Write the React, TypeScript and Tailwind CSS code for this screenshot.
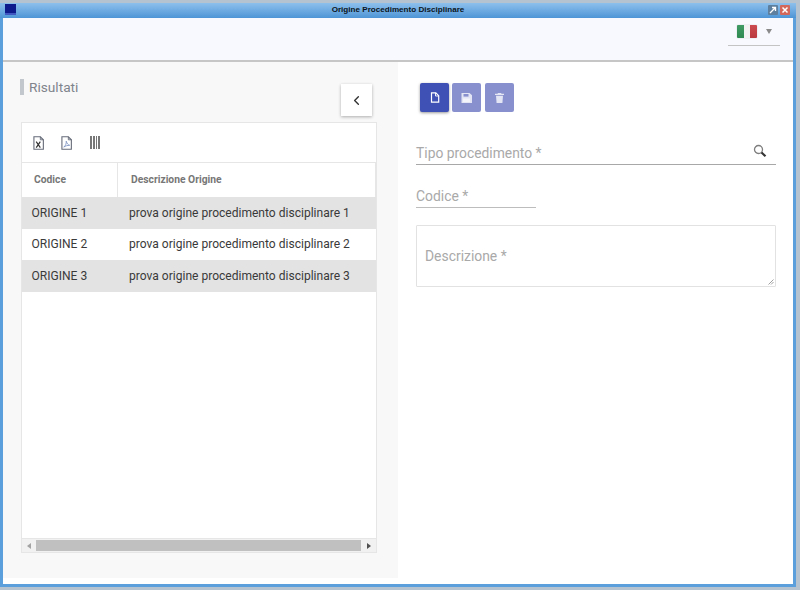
import React from 'react';
import { ChevronLeft } from 'lucide-react';

const rows = [
  { code: 'ORIGINE 1', text: 'prova origine procedimento disciplinare 1', odd: true },
  { code: 'ORIGINE 2', text: 'prova origine procedimento disciplinare 2', odd: false },
  { code: 'ORIGINE 3', text: 'prova origine procedimento disciplinare 3', odd: true },
];

function DocIcon({ label, color }: { label: string; color: string }) {
  return (
    <svg width="11" height="14" viewBox="0 0 12 15" fill="none">
      <path d="M1 .7h7l3.300 3.300v10.300H1z" fill="#fff" stroke="#666b78" strokeWidth="1.200" />
      <path d="M8 .7V4h3.300" stroke="#666b78" strokeWidth="1" />
      {label === 'x' ? (
        <path d="M3.500 6l4.500 6.500M8 6l-4.500 6.500" stroke={color} strokeWidth="1.300" />
      ) : (
        <path d="M3 12c2-1.500 3-4 2.700-6.500C6.500 8 7.500 9.500 9.500 10 7 10 4.500 10.800 3 12z" stroke={color} strokeWidth="0.9" />
      )}
    </svg>
  );
}

function NewIcon() {
  return (
    <svg width="10" height="11" viewBox="0 0 10 11" fill="none">
      <path d="M1.500 .8h4.300L8.700 3.700v6.500H1.500z" stroke="#fff" strokeWidth="1.200" />
      <path d="M5.500 .8v3.200h3.200" stroke="#fff" strokeWidth="0.9" />
    </svg>
  );
}

function SaveIcon() {
  return (
    <svg width="11" height="10" viewBox="0 0 11 10" fill="none">
      <path d="M.5 0h8L11 2.300V10H.5z" fill="#e3e5f4" />
      <rect x="2.500" y="1" width="5" height="2.600" fill="#8891cd" />
      <rect x="2" y="5.500" width="7" height="3.500" fill="#f4f5fb" />
    </svg>
  );
}

function TrashIcon() {
  return (
    <svg width="9" height="10" viewBox="0 0 9 10" fill="none">
      <path d="M3 0h3l.5.8H9v1.200H0V.8h2.500z" fill="#e3e5f4" />
      <path d="M1 2.800h7L7.400 10H1.600z" fill="#e3e5f4" />
    </svg>
  );
}

function LensIcon() {
  return (
    <svg width="14" height="14" viewBox="0 0 14 14" fill="none">
      <circle cx="5.500" cy="5.500" r="4" stroke="#7d7d7d" strokeWidth="1.300" />
      <path d="M8.500 8.500l4 3.700" stroke="#333" strokeWidth="2.200" />
    </svg>
  );
}

export default function App() {
  return (
    <div className="w-[800px] h-[590px] overflow-hidden flex flex-col bg-[#b4c3cf] pt-[3px] pr-[4px] pb-[3px] font-['Roboto',sans-serif]">
      {/* Title bar */}
      <div className="h-[15px] shrink-0 relative flex items-center justify-center bg-gradient-to-b from-[#8dc0ec] to-[#4e95d6]">
        <div className="absolute left-[5px] top-[1px] w-[11px] h-[11px] bg-[#0c1a8c] border-b-2 border-[#3f57c0]" />
        <span className="font-['Liberation_Sans',sans-serif] text-[8.1px] font-bold text-[#0b1420] leading-none">
          Origine Procedimento Disciplinare
        </span>
        <div className="absolute right-[6px] top-[2px] flex gap-[2px]">
          <div className="w-[10px] h-[10px] rounded-[1px] bg-[#5f7f9e] flex items-center justify-center">
            <svg width="8" height="8" viewBox="0 0 8 8" fill="none">
              <path d="M1 7l5-5M3 1.500h3.500V5" stroke="#fff" strokeWidth="1.300" />
            </svg>
          </div>
          <div className="w-[10px] h-[10px] rounded-[1px] bg-[#d2675a] flex items-center justify-center">
            <svg width="8" height="8" viewBox="0 0 8 8" fill="none">
              <path d="M1.500 1.500l5 5M6.500 1.500l-5 5" stroke="#fff" strokeWidth="1.500" />
            </svg>
          </div>
        </div>
      </div>

      {/* Window body */}
      <div className="flex-1 flex flex-col min-h-0 border-x-[3px] border-b-[3px] border-[#5b9fdc] bg-white">
        {/* Top bar */}
        <div className="h-[44px] shrink-0 bg-[#f8f9fe] border-b-2 border-[#c6c6c6] flex justify-end pr-[13px]">
          <div className="w-[52px] h-[28px] pt-[7px] border-b border-[#c4c4c4] flex gap-[9px] pl-[9px]">
            <div className="w-[20px] h-[13px] flex rounded-[1px] overflow-hidden shadow-[0_0_1px_rgba(0,0,0,0.4)]">
              <div className="flex-1 bg-gradient-to-b from-[#3f9a63] to-[#2f8a52]" />
              <div className="flex-1 bg-[#f2f2f2]" />
              <div className="flex-1 bg-gradient-to-b from-[#cc4a50] to-[#b93a40]" />
            </div>
            <div className="mt-[4px] w-0 h-0 border-x-[3.5px] border-x-transparent border-t-[5px] border-t-[#8a8a8a]" />
          </div>
        </div>

        <div className="flex-1 flex min-h-0">
          {/* Left panel */}
          <div className="w-[395px] shrink-0 bg-[#f8f8f8] mb-[6px] pl-[18px] pr-[21px] flex flex-col">
            <div className="h-[60px] shrink-0 relative pt-[17px]">
              <div className="flex items-center gap-[5px] -ml-[1px]">
                <div className="w-[4px] h-[16px] bg-[#c1c7cd]" />
                <span className="text-[13.7px] leading-[16px] text-[#80848c]">Risultati</span>
              </div>
              <button className="absolute right-[5px] top-[22px] w-[31px] h-[32px] bg-white shadow-[0_1px_3px_rgba(0,0,0,0.3)] flex items-center justify-center">
                <ChevronLeft size={15} strokeWidth={2.2} className="text-[#333]" />
              </button>
            </div>

            <div className="w-[356px] h-[431px] bg-white border border-[#e6e6e6] flex flex-col">
              <div className="h-[40px] shrink-0 border-b border-[#e6e6e6] flex items-center pl-[11px] gap-[17px]">
                <DocIcon label="x" color="#333" />
                <DocIcon label="p" color="#7a8fc0" />
                <div className="flex gap-[1px] ml-[1px]">
                  <div className="w-[1.75px] h-[13px] bg-[#777]" />
                  <div className="w-[1.75px] h-[13px] bg-[#777]" />
                  <div className="w-[1.75px] h-[13px] bg-[#777]" />
                  <div className="w-[1.75px] h-[13px] bg-[#777]" />
                </div>
              </div>
              <div className="h-[34px] shrink-0 flex text-[10.3px] font-bold text-[#777] leading-none">
                <div className="w-[96px] border-r border-[#e6e6e6] flex items-center pl-[12px]">Codice</div>
                <div className="flex-1 flex items-center pl-[13px] border-r border-[#e6e6e6]">Descrizione Origine</div>
              </div>
              <div className="flex-1 min-h-0">
                {rows.map((r) => (
                  <div
                    key={r.code}
                    className={`h-[31.67px] flex items-center text-[12.05px] text-[#3a3a3a] ${r.odd ? 'bg-[#e3e3e3]' : 'bg-white'}`}
                  >
                    <div className="w-[97px] pl-[9.5px]">{r.code}</div>
                    <div className="pl-[10px] whitespace-nowrap">{r.text}</div>
                  </div>
                ))}
              </div>
              <div className="h-[14px] shrink-0 bg-[#f1f1f1] flex items-center border-t border-[#e6e6e6]">
                <div className="w-[14px] flex justify-center">
                  <div className="w-0 h-0 border-y-[3px] border-y-transparent border-r-[4px] border-r-[#a3a3a3]" />
                </div>
                <div className="flex-1 h-[11px] bg-[#c0c0c0]" />
                <div className="w-[15px] flex justify-center">
                  <div className="w-0 h-0 border-y-[3px] border-y-transparent border-l-[4px] border-l-[#505050]" />
                </div>
              </div>
            </div>
          </div>

          {/* Right panel */}
          <div className="flex-1 bg-white pl-[18px] pt-[21px]">
            <div className="flex gap-[3px] pl-[4px]">
              <button className="w-[29px] h-[29px] rounded-[2px] bg-[#3f51b5] shadow-[0_1px_3px_rgba(0,0,0,0.4)] flex items-center justify-center">
                <NewIcon />
              </button>
              <button className="w-[29px] h-[29px] rounded-[2px] bg-[#8891cd] flex items-center justify-center">
                <SaveIcon />
              </button>
              <button className="w-[29px] h-[29px] ml-[1px] rounded-[2px] bg-[#8891cd] flex items-center justify-center">
                <TrashIcon />
              </button>
            </div>

            <div className="mt-[26px] w-[360px] h-[27px] border-b border-[#a8a8a8] flex items-end justify-between pb-[1px] text-[13.85px] leading-[20px] text-[#a9a9a9]">
              <span>Tipo procedimento *</span>
              <div className="mr-[9px] mb-[5px]">
                <LensIcon />
              </div>
            </div>
            <div className="mt-[16px] w-[120px] h-[27px] border-b border-[#bdbdbd] flex items-end pb-[1px] text-[13.9px] leading-[20px] text-[#a9a9a9]">
              Codice *
            </div>
            <div className="mt-[17px] w-[360px] h-[62px] border border-[#e2e2e2] rounded-[1px] flex items-center pl-[8px] text-[13.9px] text-[#a9a9a9] relative">
              Descrizione *
              <svg className="absolute right-[1px] bottom-[1px]" width="6" height="6" viewBox="0 0 6 6" fill="none">
                <path d="M5.500 .5l-5 5M5.500 3l-2.500 2.500" stroke="#888" strokeWidth="0.8" />
              </svg>
            </div>
          </div>
        </div>
      </div>
    </div>
  );
}
